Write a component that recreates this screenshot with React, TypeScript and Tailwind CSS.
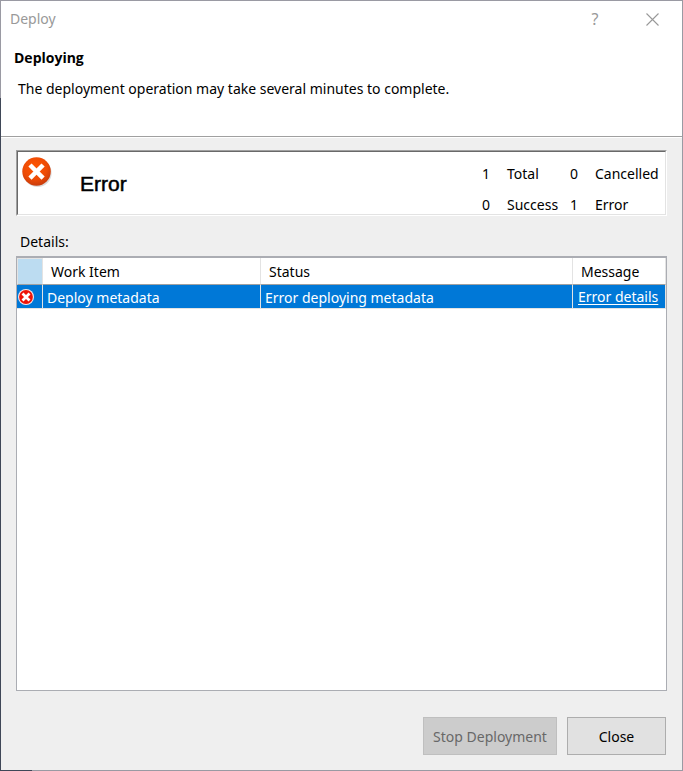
import React from "react";

function BadgeIcon({ className, small }: { className: string; small?: boolean }) {
  return (
    <svg viewBox="0 0 32 32" className={className} aria-hidden="true">
      <defs>
        <radialGradient id="badgeFill" cx="45%" cy="35%" r="65%">
          <stop offset="0" stopColor="#ff5500" />
          <stop offset="0.65" stopColor="#ed4b06" />
          <stop offset="1" stopColor="#c83c0c" />
        </radialGradient>
      </defs>
      {small ? (
        <>
          <circle cx="16" cy="16" r="16" fill="#f7e9ea" />
          <circle cx="16" cy="16" r="13.8" fill="#ee1408" />
          <path d="M9 9L23 23M23 9L9 23" stroke="#fff" strokeWidth="5.5" />
        </>
      ) : (
        <>
          <circle cx="16.6" cy="17" r="15" fill="#000" opacity="0.14" />
          <circle cx="15.5" cy="15.5" r="15.2" fill="url(#badgeFill)" />
          <path d="M8.5 8.5L22.5 22.5M22.5 8.5L8.5 22.5" stroke="#fff" strokeWidth="4.8" />
        </>
      )}
    </svg>
  );
}

const items = [
  { name: "Deploy metadata", status: "Error deploying metadata", message: "Error details" },
];

export default function App() {
  return (
    <div className="relative flex min-h-screen flex-col border border-[#9a9aa3] bg-[#efefef] font-['Noto_Sans','Open_Sans',sans-serif] text-sm leading-5 text-black">
      <div className="absolute top-[97px] -bottom-px -left-px w-px bg-[#3f4757]" />
      <div className="absolute -bottom-px -left-px h-px w-8 bg-[#3f4757]" />

      <header className="flex h-[137px] flex-col border-b border-white bg-white">
        <div className="flex h-full flex-col border-b border-[#a0a0a0]">
          <div className="flex h-9 items-center justify-between pr-[14px] pl-[9px] text-[#999999]">
            <span>Deploy</span>
            <div className="flex items-center gap-[25px]">
              <button type="button" aria-label="Help" className="h-8 w-8 text-base">?</button>
              <button type="button" aria-label="Close window" className="flex h-8 w-8 items-center justify-center">
                <svg viewBox="0 0 13 13" className="h-[13px] w-[13px]" aria-hidden="true">
                  <path d="M0.5 0.5L12.5 12.5M12.5 0.5L0.5 12.5" stroke="#999" strokeWidth="1.1" />
                </svg>
              </button>
            </div>
          </div>
          <h1 className="mt-[11px] pl-[13px] font-['Open_Sans','Noto_Sans',sans-serif] font-bold">Deploying</h1>
          <p className="mt-[11px] pl-[17px]">
            The deployment operation may take several minutes to complete.
          </p>
        </div>
      </header>

      <main className="flex flex-1 flex-col px-[15px] pt-3 pb-[15px]">
        <section className="border border-t-[#a0a0a0] border-r-white border-b-white border-l-[#a0a0a0]">
          <div className="flex h-16 justify-between border border-t-[#696969] border-r-[#e3e3e3] border-b-[#e3e3e3] border-l-[#696969] bg-white">
            <div className="flex pt-[5px] pl-1">
              <BadgeIcon className="h-[30px] w-[30px]" />
              <h2 className="mt-[15px] ml-7 font-['Liberation_Sans',Arial,sans-serif] text-[21px] leading-6 [-webkit-text-stroke:0.5px_black]">
                Error
              </h2>
            </div>
            <dl className="grid grid-cols-[25px_63px_25px_66px] content-start gap-y-[11px] pt-3 pr-1">
              <dd>1</dd>
              <dt>Total</dt>
              <dd>0</dd>
              <dt>Cancelled</dt>
              <dd>0</dd>
              <dt>Success</dt>
              <dd>1</dd>
              <dt>Error</dt>
            </dl>
          </div>
        </section>

        <h3 id="details" className="mt-4 mb-1 pl-1">Details:</h3>

        <div className="flex-1 border border-t-2 border-[#abadb3] bg-white">
          <table aria-labelledby="details" className="w-full table-fixed border-separate border-spacing-0 text-left">
            <colgroup>
              <col className="w-[26px]" />
              <col className="w-[218px]" />
              <col />
              <col className="w-[93px]" />
            </colgroup>
            <thead>
              <tr className="h-[27px]">
                <th className="border-t border-r border-b border-l border-[#e3e3e3] border-b-[#a0a0a0] bg-[#bcdcf1] p-0" />
                <th className="border-r border-b border-[#e3e3e3] border-b-[#a0a0a0] p-0 pt-px pl-2 font-normal">Work Item</th>
                <th className="border-r border-b border-[#e3e3e3] border-b-[#a0a0a0] p-0 pt-px pl-2 font-normal">Status</th>
                <th className="border-r border-b border-[#e3e3e3] border-b-[#a0a0a0] p-0 pt-px pl-2 font-normal">Message</th>
              </tr>
            </thead>
            <tbody>
              {items.map((item) => (
                <tr key={item.name} className="h-6 bg-[#0078d7] text-white">
                  <td className="border-r border-b border-[#e3e3e3] p-0 pl-px">
                    <BadgeIcon small className="h-4 w-4" />
                  </td>
                  <td className="border-r border-b border-[#e3e3e3] p-0 pt-0.5 pl-1">{item.name}</td>
                  <td className="border-r border-b border-[#e3e3e3] p-0 pt-0.5 pl-1">{item.status}</td>
                  <td className="border-r border-b border-[#e3e3e3] p-0 pl-[5px]">
                    <a href="#details" className="block underline underline-offset-2">{item.message}</a>
                  </td>
                </tr>
              ))}
            </tbody>
          </table>
        </div>

        <footer className="mt-[26px] flex justify-end gap-[10px] pr-px">
          <button type="button" disabled className="h-[38px] w-[134px] border border-[#bfbfbf] bg-[#cccccc] pt-px text-[#686868]">
            Stop Deployment
          </button>
          <button type="button" className="h-[38px] w-[99px] border border-[#adadad] bg-[#e1e1e1] pt-px">
            Close
          </button>
        </footer>
      </main>
    </div>
  );
}
